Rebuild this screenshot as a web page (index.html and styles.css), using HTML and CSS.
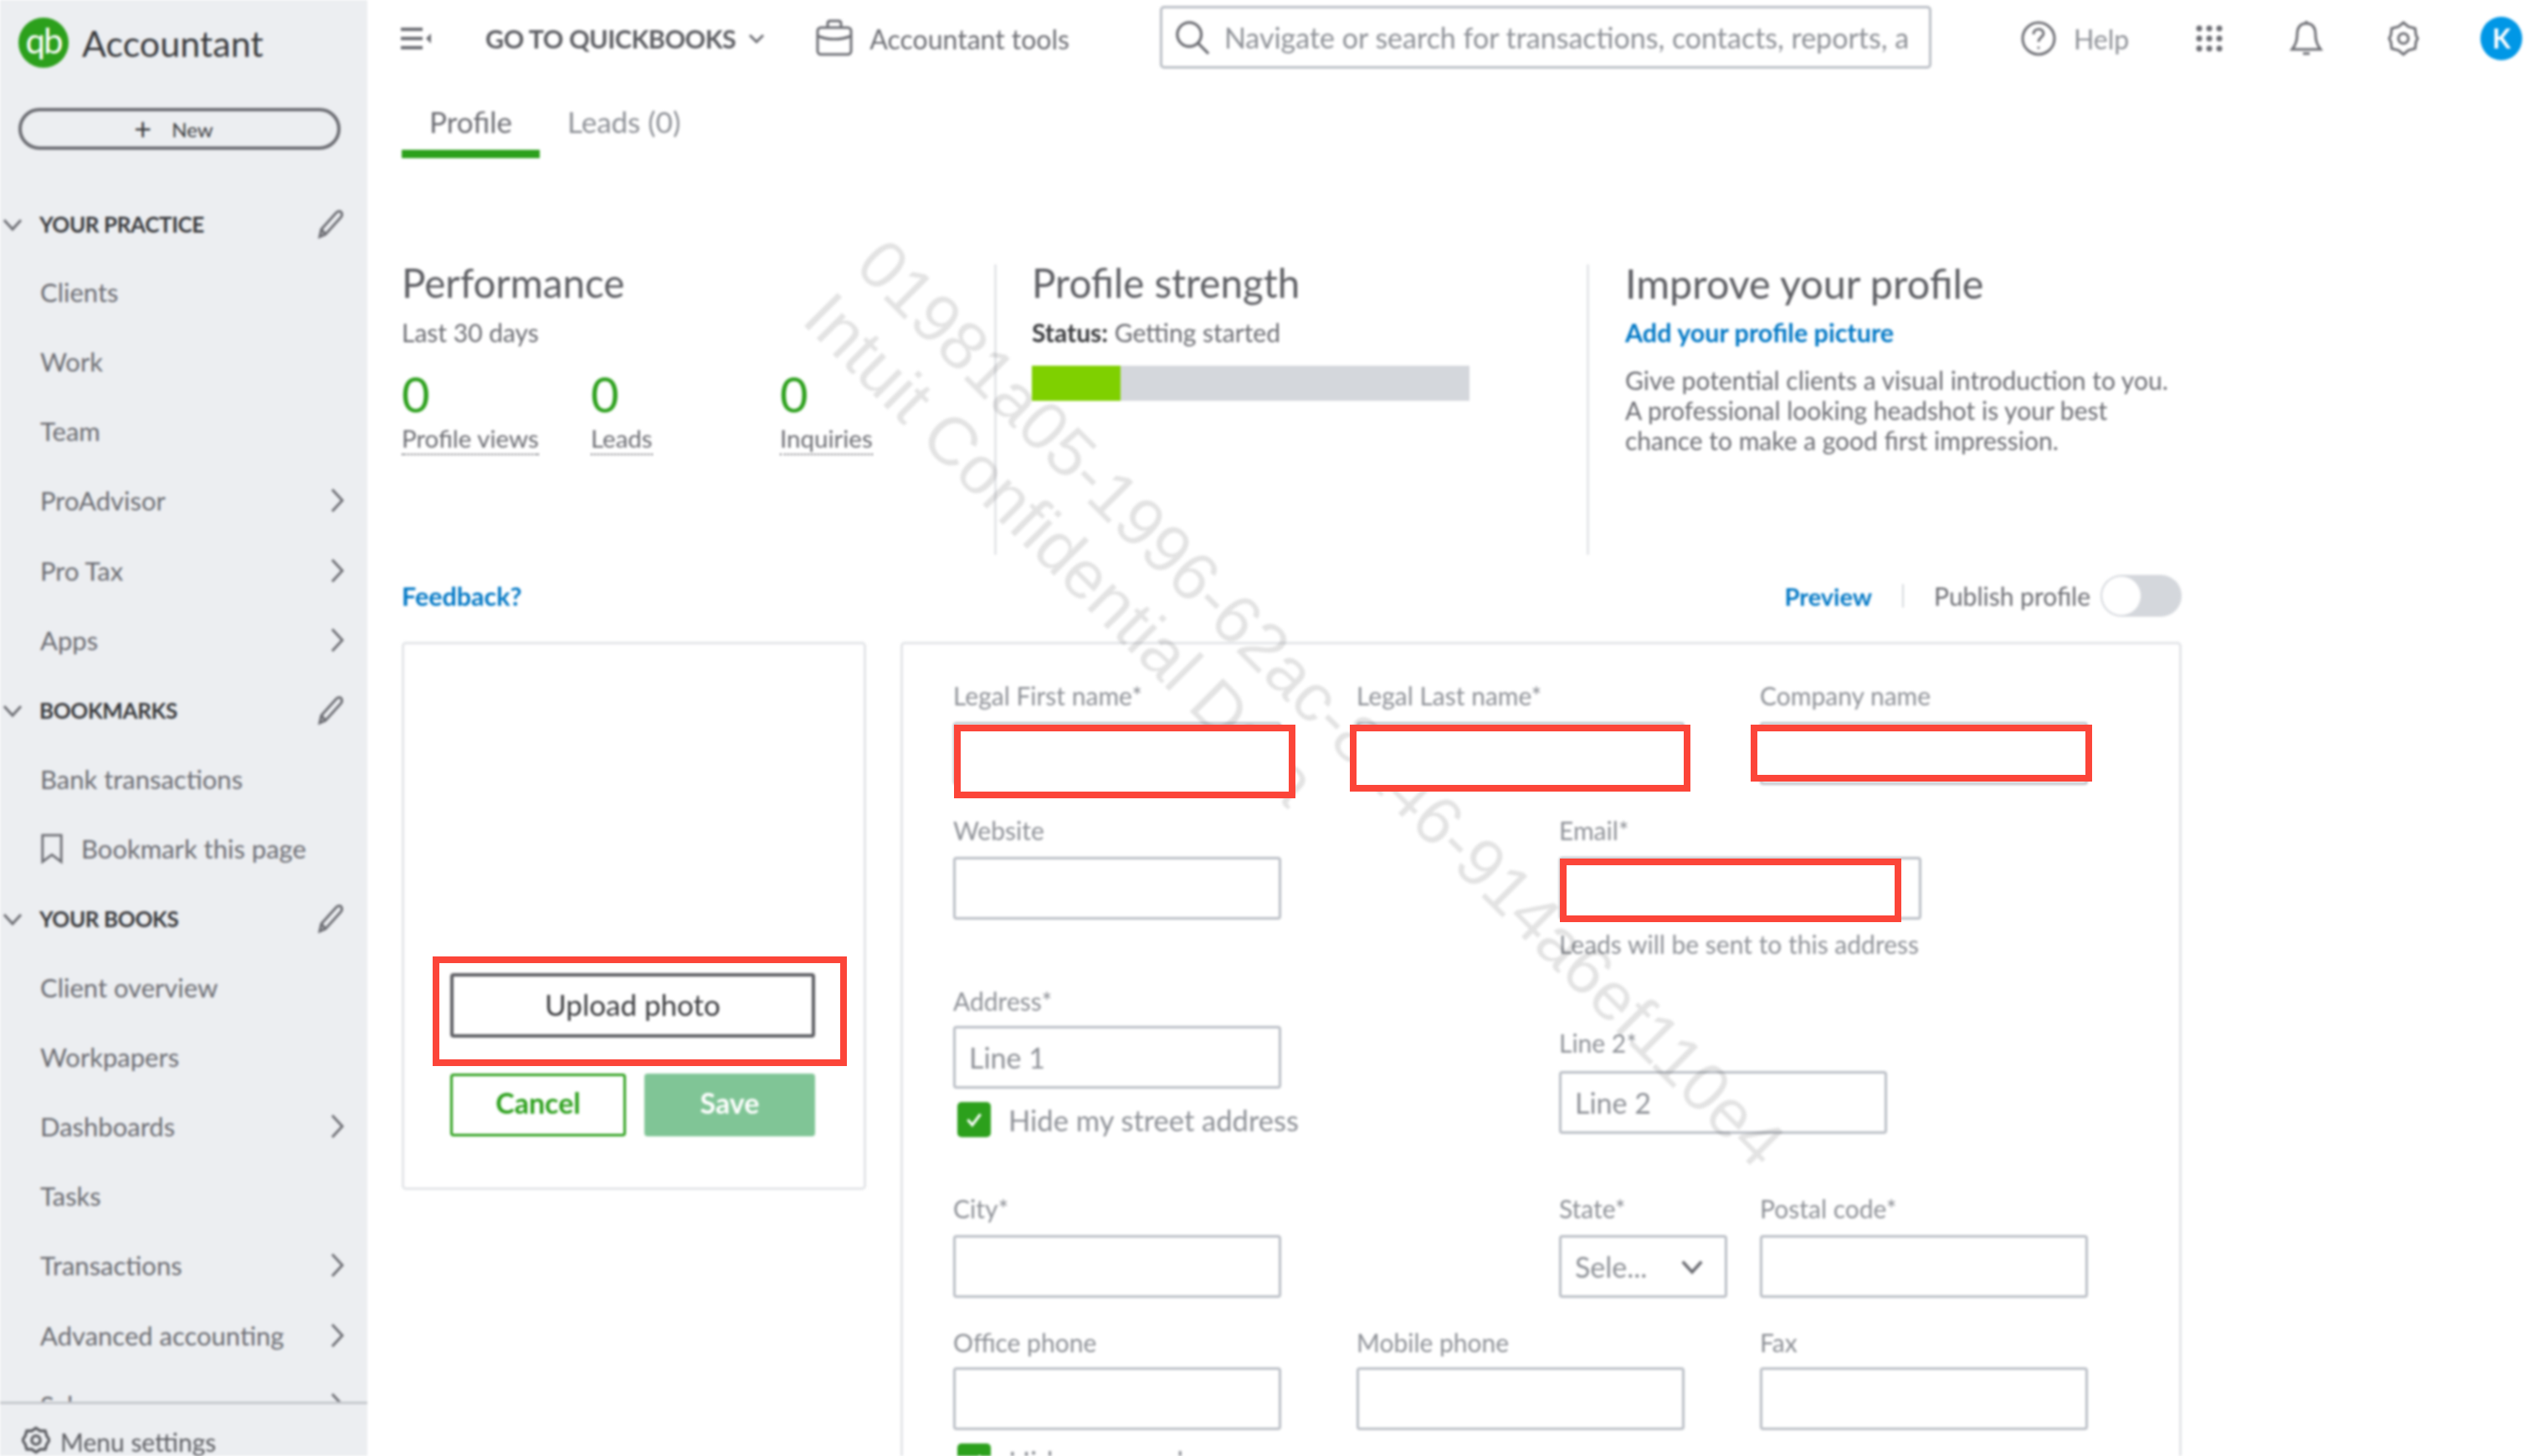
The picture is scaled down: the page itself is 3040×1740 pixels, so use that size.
FILE: index.html
```html
<!DOCTYPE html>
<html lang="en">
<head>
  <meta charset="UTF-8">
  <title>Accountant - Profile</title>
  <link rel="stylesheet" href="styles.css">
</head>
<body>
  <div class="app">
    <aside class="sidebar">
      <div class="brand">
        <span class="brand-logo">qb</span>
        <span class="brand-name">Accountant</span>
      </div>
      <button class="new-button"><span class="new-plus">+</span> New</button>
      <nav class="side-nav">
        <div class="side-head">
          <svg class="chev-down" viewBox="0 0 24 24"><path d="M2 7l10 11L22 7"/></svg>
          <span>YOUR PRACTICE</span>
          <svg class="pencil" viewBox="0 0 36 36"><path d="M5 33l2-9L25 4c2-2 5-2 6 0s1 4-1 6L12 30z M7 24l5 6"/></svg>
        </div>
        <div class="side-item">Clients</div>
        <div class="side-item">Work</div>
        <div class="side-item">Team</div>
        <div class="side-item">ProAdvisor <svg class="chev-right" viewBox="0 0 20 32"><path d="M4 3l12 13L4 29"/></svg></div>
        <div class="side-item">Pro Tax <svg class="chev-right" viewBox="0 0 20 32"><path d="M4 3l12 13L4 29"/></svg></div>
        <div class="side-item">Apps <svg class="chev-right" viewBox="0 0 20 32"><path d="M4 3l12 13L4 29"/></svg></div>
        <div class="side-head">
          <svg class="chev-down" viewBox="0 0 24 24"><path d="M2 7l10 11L22 7"/></svg>
          <span>BOOKMARKS</span>
          <svg class="pencil" viewBox="0 0 36 36"><path d="M5 33l2-9L25 4c2-2 5-2 6 0s1 4-1 6L12 30z M7 24l5 6"/></svg>
        </div>
        <div class="side-item">Bank transactions</div>
        <div class="side-item side-item-mark">
          <svg class="bookmark" viewBox="0 0 30 40"><path d="M3 3h24v34L15 28 3 37z"/></svg>
          Bookmark this page
        </div>
        <div class="side-head">
          <svg class="chev-down" viewBox="0 0 24 24"><path d="M2 7l10 11L22 7"/></svg>
          <span>YOUR BOOKS</span>
          <svg class="pencil" viewBox="0 0 36 36"><path d="M5 33l2-9L25 4c2-2 5-2 6 0s1 4-1 6L12 30z M7 24l5 6"/></svg>
        </div>
        <div class="side-item">Client overview</div>
        <div class="side-item">Workpapers</div>
        <div class="side-item">Dashboards <svg class="chev-right" viewBox="0 0 20 32"><path d="M4 3l12 13L4 29"/></svg></div>
        <div class="side-item">Tasks</div>
        <div class="side-item">Transactions <svg class="chev-right" viewBox="0 0 20 32"><path d="M4 3l12 13L4 29"/></svg></div>
        <div class="side-item">Advanced accounting <svg class="chev-right" viewBox="0 0 20 32"><path d="M4 3l12 13L4 29"/></svg></div>
        <div class="side-item">Sales <svg class="chev-right" viewBox="0 0 20 32"><path d="M4 3l12 13L4 29"/></svg></div>
      </nav>
      <div class="side-foot">
        <svg class="icon-gear-small" viewBox="0 0 40 40"><path d="M20 3l6 4 7 0 2 7 4 6-4 6-2 7-7 0-6 4-6-4-7 0-2-7-4-6 4-6 2-7 7 0z"/><circle cx="20" cy="20" r="6"/></svg>
        Menu settings
      </div>
    </aside>

    <main class="main">
      <header class="topbar">
        <svg class="icon-menu" viewBox="0 0 38 28"><path d="M1 3h26M1 14h26M1 25h26"/><path class="fill" d="M37 8v12l-6-6z"/></svg>
        <div class="goto">GO TO QUICKBOOKS</div>
        <svg class="goto-chev" viewBox="0 0 20 12"><path d="M2 2l8 8 8-8"/></svg>
        <svg class="icon-case" viewBox="0 0 44 44"><path d="M14 10V5c0-2 1-3 3-3h10c2 0 3 1 3 3v5"/><rect x="2" y="10" width="40" height="32" rx="4"/><path d="M2 20c12 5 28 5 40 0"/></svg>
        <div class="tools">Accountant tools</div>
        <div class="search">
          <svg class="icon-search" viewBox="0 0 44 44"><circle cx="18" cy="18" r="15"/><path d="M29 29l13 13"/></svg>
          <input class="search-input" placeholder="Navigate or search for transactions, contacts, reports, and more">
        </div>
        <svg class="icon-help" viewBox="0 0 44 44"><circle cx="22" cy="22" r="19"/><path d="M16 17c0-8 12-8 12-1 0 4-6 5-6 10"/><circle class="fill" cx="22" cy="33" r="1.5"/></svg>
        <div class="help">Help</div>
        <svg class="icon-grid" viewBox="0 0 34 34">
          <circle cx="5" cy="5" r="3.5"/><circle cx="17" cy="5" r="3.5"/><circle cx="29" cy="5" r="3.5"/>
          <circle cx="5" cy="17" r="3.5"/><circle cx="17" cy="17" r="3.5"/><circle cx="29" cy="17" r="3.5"/>
          <circle cx="5" cy="29" r="3.5"/><circle cx="17" cy="29" r="3.5"/><circle cx="29" cy="29" r="3.5"/>
        </svg>
        <svg class="icon-bell" viewBox="0 0 40 46"><path d="M20 5c-8 0-11 6-11 14 0 8-2 12-6 17h34c-4-5-6-9-6-17 0-8-3-14-11-14z"/><path d="M20 2v3M16 41h8"/></svg>
        <svg class="icon-gear" viewBox="0 0 40 44"><path d="M20 3l6 5 8 2 1 8 2 4-2 4-1 8-8 2-6 5-6-5-8-2-1-8-2-4 2-4 1-8 8-2z"/><circle cx="20" cy="22" r="6"/></svg>
        <div class="avatar">K</div>
      </header>

      <div class="tabs">
        <div class="tab tab-active">Profile</div>
        <div class="tab">Leads (0)</div>
      </div>

      <section class="summary">
        <div class="summary-col summary-perf">
          <h2>Performance</h2>
          <p class="sub">Last 30 days</p>
          <div class="stats">
            <div class="stat"><div class="stat-num">0</div><span class="stat-label">Profile views</span></div>
            <div class="stat"><div class="stat-num">0</div><span class="stat-label">Leads</span></div>
            <div class="stat"><div class="stat-num">0</div><span class="stat-label">Inquiries</span></div>
          </div>
        </div>
        <div class="summary-col summary-strength">
          <h2>Profile strength</h2>
          <p class="sub"><b>Status:</b> Getting started</p>
          <div class="bar"><div class="bar-fill" style="width: 20.3%"></div></div>
        </div>
        <div class="summary-col summary-improve">
          <h2>Improve your profile</h2>
          <p class="sub"><a class="link link-large">Add your profile picture</a></p>
          <p class="improve-text">Give potential clients a visual introduction to you.<br>A professional looking headshot is your best<br>chance to make a good first impression.</p>
        </div>
      </section>

      <div class="actions">
        <a class="link link-large">Feedback?</a>
        <div class="actions-right">
          <a class="link">Preview</a>
          <span class="actions-sep"></span>
          <span class="publish">Publish profile</span>
          <span class="toggle"><span class="toggle-knob"></span></span>
        </div>
      </div>

      <div class="cards">
        <div class="card card-photo">
          <button class="btn-upload">Upload photo</button>
          <div class="photo-buttons">
            <button class="btn-cancel">Cancel</button>
            <button class="btn-save">Save</button>
          </div>
        </div>

        <div class="card card-form">
          <div class="form-row row-names">
            <div class="field"><label>Legal First name*</label><input class="input"></div>
            <div class="field"><label>Legal Last name*</label><input class="input"></div>
            <div class="field"><label>Company name</label><input class="input"></div>
          </div>
          <div class="form-row row-split row-contact">
            <div class="field"><label>Website</label><input class="input"></div>
            <div class="field field-email"><label>Email*</label><input class="input"><p class="help-text">Leads will be sent to this address</p></div>
          </div>
          <div class="form-row row-split row-address">
            <div class="field">
              <label>Address*</label>
              <input class="input" placeholder="Line 1">
              <div class="check-row">
                <span class="check"><svg viewBox="0 0 24 24"><path d="M5 12l5 6 9-12"/></svg></span>
                Hide my street address
              </div>
            </div>
            <div class="field field-line2"><label>Line 2*</label><input class="input" placeholder="Line 2"></div>
          </div>
          <div class="form-row row-split row-city">
            <div class="field"><label>City*</label><input class="input"></div>
            <div class="state-postal">
              <div class="field field-state">
                <label>State*</label>
                <div class="select">Sele... <svg viewBox="0 0 24 16"><path d="M3 3l9 10 9-10"/></svg></div>
              </div>
              <div class="field"><label>Postal code*</label><input class="input"></div>
            </div>
          </div>
          <div class="form-row row-phones">
            <div class="field">
              <label>Office phone</label><input class="input">
              <div class="check-row">
                <span class="check"><svg viewBox="0 0 24 24"><path d="M5 12l5 6 9-12"/></svg></span>
                Hide my number
              </div>
            </div>
            <div class="field"><label>Mobile phone</label><input class="input"></div>
            <div class="field"><label>Fax</label><input class="input"></div>
          </div>
        </div>
      </div>
    </main>

    <div class="watermark">01981a05-1996-62ac-8a46-914a6ef110e4<br>Intuit Confidential Data</div>
  </div>

  <div class="mark mark-first"></div>
  <div class="mark mark-last"></div>
  <div class="mark mark-company"></div>
  <div class="mark mark-email"></div>
  <div class="mark mark-upload"></div>
</body>
</html>
```

FILE: styles.css
```css
html, body {
  margin: 0;
  padding: 0;
  height: 100%;
  overflow: hidden;
}
body {
  font-family: Lato, "Open Sans", sans-serif;
  color: #6b6c72;
  background: #fff;
}
svg {
  fill: none;
  stroke: currentColor;
  stroke-width: 3;
  flex: none;
}
svg .fill {
  fill: currentColor;
  stroke: none;
}
h2, p {
  margin: 0;
}
button {
  font-family: inherit;
  cursor: pointer;
}

/* the source picture is soft, the red marks on top of it are not */
.app {
  display: flex;
  width: 3040px;
  height: 1740px;
  position: relative;
  overflow: hidden;
  filter: blur(1.4px);
}

/* sidebar */
.sidebar {
  width: 439px;
  flex: none;
  display: flex;
  flex-direction: column;
  background: #eceef1;
  height: 1740px;
}
.brand {
  display: flex;
  align-items: center;
  gap: 16px;
  padding: 21px 0 0 22px;
  height: 60px;
}
.brand-logo {
  width: 60px;
  height: 60px;
  border-radius: 50%;
  background: #2ca01c;
  color: #fff;
  font-size: 42px;
  line-height: 54px;
  letter-spacing: -2px;
  text-align: center;
}
.brand-name {
  font-size: 43px;
  color: #393a3d;
}
.new-button {
  margin: 48px 0 0 22px;
  width: 385px;
  height: 50px;
  border: 4px solid #6b6c72;
  border-radius: 25px;
  background: #eceef1;
  color: #393a3d;
  font-size: 24px;
  padding: 0 14px 0 0;
}
.new-plus {
  font-size: 36px;
  line-height: 20px;
  margin-right: 18px;
  vertical-align: -3px;
}
.side-nav {
  flex: 1;
  overflow: hidden;
  margin-top: 47px;
}
.side-head, .side-item {
  height: 83.1px;
  display: flex;
  align-items: center;
  box-sizing: border-box;
}
.side-head {
  padding: 0 26px 0 3px;
  font-size: 26px;
  font-weight: 700;
  color: #393a3d;
  letter-spacing: -0.4px;
}
.side-item {
  padding: 0 26px 3px 48px;
  font-size: 31px;
  color: #6b6c72;
  justify-content: space-between;
}
.side-item-mark {
  justify-content: flex-start;
}
.chev-down {
  width: 24px;
  height: 24px;
  margin-right: 20px;
  stroke: #6b6c72;
}
.pencil {
  width: 36px;
  height: 36px;
  margin-left: auto;
  stroke: #6b6c72;
}
.chev-right {
  width: 20px;
  height: 32px;
  stroke: #6b6c72;
}
.bookmark {
  width: 28px;
  height: 40px;
  margin-right: 21px;
  stroke: #6b6c72;
}
.side-foot {
  height: 65px;
  box-sizing: border-box;
  border-top: 3px solid #c4c7cc;
  display: flex;
  align-items: flex-end;
  gap: 12px;
  padding: 0 0 0 26px;
  font-size: 30px;
  color: #5c5d62;
  line-height: 34px;
}
.icon-gear-small {
  width: 34px;
  height: 38px;
  stroke: #5c5d62;
  stroke-width: 4;
}

/* top bar */
.main {
  flex: 1;
  padding-left: 41px;
  min-width: 0;
}
.topbar {
  display: flex;
  align-items: center;
  height: 92px;
  margin-left: -2px;
  color: #6b6c72;
}
.icon-menu {
  width: 38px;
  height: 28px;
  stroke-width: 4;
}
.goto {
  margin-left: 64px;
  font-size: 30.5px;
  font-weight: 700;
  color: #5c5d62;
  letter-spacing: -0.5px;
}
.goto-chev {
  width: 20px;
  height: 12px;
  margin-left: 15px;
}
.icon-case {
  width: 44px;
  height: 44px;
  margin-left: 61px;
  margin-top: -2px;
}
.tools {
  margin-left: 20px;
  font-size: 32px;
}
.search {
  display: flex;
  align-items: center;
  gap: 17px;
  width: 922px;
  height: 75px;
  box-sizing: border-box;
  margin: -3px 0 0 108px;
  padding: 0 24px 0 15px;
  border: 3px solid #babec5;
  border-radius: 5px;
}
.icon-search {
  width: 42px;
  height: 42px;
  stroke-width: 3.5;
}
.search-input {
  flex: 1;
  min-width: 0;
  border: 0;
  outline: 0;
  padding: 0;
  font-family: inherit;
  font-size: 34px;
  color: #6b6c72;
}
.search-input::placeholder, .input::placeholder {
  color: #8d9096;
  opacity: 1;
}
.icon-help {
  width: 44px;
  height: 44px;
  margin-left: 106px;
}
.help {
  margin-left: 20px;
  font-size: 32px;
  color: #8d9096;
}
.icon-grid {
  width: 34px;
  height: 34px;
  margin-left: 79px;
  fill: #6b6c72;
  stroke: none;
}
.icon-bell {
  width: 40px;
  height: 46px;
  margin-left: 79px;
}
.icon-gear {
  width: 40px;
  height: 44px;
  margin-left: 76px;
}
.avatar {
  width: 50px;
  height: 52px;
  margin-left: 72px;
  border-radius: 50%;
  background: #0097e6;
  color: #fff;
  font-size: 32px;
  font-weight: 700;
  line-height: 52px;
  text-align: center;
}

/* tabs */
.tabs {
  display: flex;
  height: 97px;
}
.tab {
  height: 87px;
  line-height: 106px;
  padding: 0 33px;
  font-size: 35px;
  color: #8d9096;
}
.tab-active {
  color: #6b6c72;
  border-bottom: 10px solid #2ca01c;
}

/* summary columns */
.summary {
  display: flex;
  width: 2127px;
  height: 347px;
  margin-top: 127px;
}
.summary-col {
  box-sizing: border-box;
}
.summary-perf {
  width: 711px;
  border-right: 3px solid #e3e5e8;
}
.summary-strength {
  width: 708px;
  padding-left: 42px;
  border-right: 3px solid #e3e5e8;
}
.summary-improve {
  padding-left: 43px;
}
.summary h2 {
  font-size: 47.5px;
  line-height: 44px;
  font-weight: 400;
  color: #5c5d62;
}
.summary-improve h2 {
  font-size: 48.5px;
}
.sub {
  margin-top: 19px;
  font-size: 30px;
  line-height: 36px;
  color: #6b6c72;
}
.sub b {
  color: #393a3d;
}
.stats {
  display: flex;
  margin-top: 26px;
}
.stat {
  width: 226px;
}
.stat-num {
  font-size: 58px;
  line-height: 60px;
  color: #2ca01c;
}
.stat-label {
  display: inline-block;
  margin-top: 5px;
  font-size: 29.5px;
  line-height: 36px;
  border-bottom: 2px dotted #6b6c72;
}
.bar {
  width: 523px;
  height: 42px;
  margin-top: 22px;
  background: #d4d7dc;
}
.bar-fill {
  height: 100%;
  background: #7fd000;
}
.link {
  color: #0077c5;
  font-size: 29px;
  font-weight: 700;
}
.link-large {
  font-size: 30.5px;
}
.improve-text {
  margin-top: 21px;
  font-size: 30px;
  line-height: 36px;
}

/* preview row */
.actions {
  display: flex;
  align-items: center;
  justify-content: space-between;
  width: 2127px;
  height: 50px;
  margin-top: 24px;
}
.actions-right {
  display: flex;
  align-items: center;
}
.actions-sep {
  width: 2px;
  height: 28px;
  margin: 0 36px;
  background: #d4d7dc;
}
.publish {
  font-size: 30px;
}
.toggle {
  width: 97px;
  height: 50px;
  margin-left: 12px;
  border-radius: 25px;
  background: #d4d7dc;
  display: flex;
}
.toggle-knob {
  width: 46px;
  height: 46px;
  margin: 2px;
  border-radius: 50%;
  background: #fff;
}

/* cards */
.cards {
  display: flex;
  gap: 41px;
  width: 2127px;
  margin-top: 30px;
}
.card {
  box-sizing: border-box;
  border: 3px solid #e3e5e8;
  border-radius: 5px;
  background: #fff;
}
.card-photo {
  width: 555px;
  height: 655px;
  padding: 0 58px 61px 55px;
  display: flex;
  flex-direction: column;
  justify-content: flex-end;
}
.btn-upload {
  height: 77px;
  border: 4px solid #5c5d62;
  border-radius: 4px;
  background: #fff;
  color: #393a3d;
  font-size: 35px;
  padding: 0 0 3px;
}
.photo-buttons {
  display: flex;
  gap: 22px;
  margin-top: 43px;
}
.btn-cancel, .btn-save {
  flex: 1;
  height: 75px;
  border-radius: 4px;
  font-size: 34px;
  font-weight: 700;
  padding: 0 0 7px;
}
.btn-cancel {
  border: 3px solid #2ca01c;
  background: #fff;
  color: #2ca01c;
}
.btn-save {
  border: 0;
  background: #80c596;
  color: #fff;
}
.card-form {
  width: 1531px;
  height: 1100px;
  padding: 47px 0 0 60px;
}

/* form */
.form-row {
  display: flex;
  gap: 90px;
}
.row-split {
  gap: 332px;
}
.row-names {
  margin-bottom: 40px;
}
.row-contact {
  margin-bottom: 40px;
}
.row-address {
  margin-bottom: 71px;
}
.row-city {
  margin-bottom: 39px;
}
.field {
  width: 392px;
}
.field label {
  display: block;
  height: 30px;
  line-height: 28px;
  margin-bottom: 16px;
  font-size: 30px;
  white-space: nowrap;
  color: #8d9096;
}
.input {
  display: block;
  width: 100%;
  height: 75px;
  box-sizing: border-box;
  padding: 0 16px;
  border: 3px solid #babec5;
  border-radius: 4px;
  background: #fff;
  font-family: inherit;
  font-size: 34px;
}
.field-email {
  width: 433px;
}
.help-text {
  margin-top: 15px;
  font-size: 30px;
  line-height: 28px;
  white-space: nowrap;
  color: #8d9096;
}
.row-address .field label, .row-phones .field label {
  margin-bottom: 14px;
}
.field-line2 {
  padding-top: 50px;
}
.row-address .field-line2 label {
  margin-bottom: 18px;
}
.state-postal {
  display: flex;
  gap: 39px;
}
.field-state {
  width: 201px;
}
.select {
  height: 75px;
  box-sizing: border-box;
  border: 3px solid #babec5;
  border-radius: 4px;
  padding: 0 24px 0 16px;
  display: flex;
  align-items: center;
  justify-content: space-between;
  font-size: 34px;
  color: #8d9096;
}
.select svg {
  width: 30px;
  height: 20px;
  stroke: #6b6c72;
  stroke-width: 3;
}
.check-row {
  display: flex;
  align-items: center;
  gap: 21px;
  margin: 16px 0 0 5px;
  white-space: nowrap;
  font-size: 34.5px;
  color: #8d9096;
}
.check {
  flex: none;
  width: 40px;
  height: 42px;
  border-radius: 5px;
  background: #2ca01c;
  display: flex;
  align-items: center;
  justify-content: center;
}
.check svg {
  width: 26px;
  height: 26px;
  stroke: #fff;
}

/* overlays */
.watermark {
  position: absolute;
  left: 1071px;
  top: 269px;
  transform: rotate(45deg);
  transform-origin: 0 0;
  font-family: "Liberation Sans", Arial, sans-serif;
  font-size: 81.5px;
  line-height: 90px;
  white-space: nowrap;
  color: rgba(0, 0, 0, 0.11);
  pointer-events: none;
}
.mark {
  position: absolute;
  box-sizing: border-box;
  border: 8px solid #fc4539;
  background: #fff;
}
.mark-first {
  left: 1140px;
  top: 866px;
  width: 408px;
  height: 88px;
}
.mark-last {
  left: 1613px;
  top: 866px;
  width: 407px;
  height: 80px;
}
.mark-company {
  left: 2092px;
  top: 866px;
  width: 408px;
  height: 68px;
}
.mark-email {
  left: 1864px;
  top: 1026px;
  width: 408px;
  height: 76px;
}
.mark-upload {
  left: 517px;
  top: 1143px;
  width: 495px;
  height: 131px;
  background: none;
}
```
